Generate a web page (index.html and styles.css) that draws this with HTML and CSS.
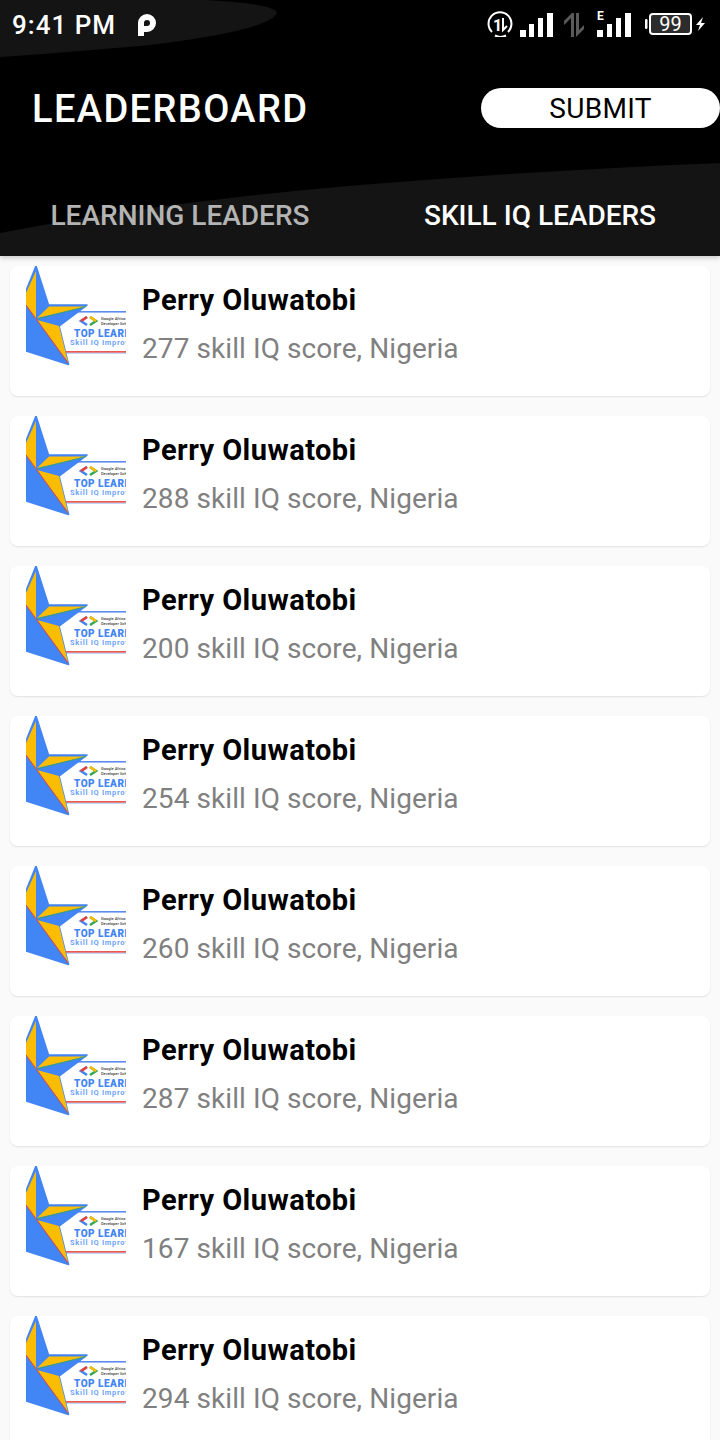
FILE: index.html
```html
<!DOCTYPE html>
<html lang="en">
<head>
<meta charset="utf-8">
<title>Leaderboard</title>
<link rel="stylesheet" href="styles.css">
</head>
<body>
<svg class="defs" width="0" height="0" aria-hidden="true">
  <defs>
    <symbol id="logo" viewBox="0 0 100 100">
      <polygon points="52,46 100,46 100,86 39,86" fill="#fff"/>
      <rect x="52" y="45" width="48" height="1.6" fill="#5b8def"/>
      <rect x="38" y="85" width="62" height="1.8" fill="#ea5a4e"/>
      <rect x="38" y="86.8" width="62" height="0.8" fill="#9dbcf5"/>
      <polygon points="10,0 22.5,39 61,39 33,60 42.5,98.5 0,85 -2,30" fill="#4285f4" stroke="#4285f4" stroke-width="1.6" stroke-linejoin="round"/>
      <polygon points="10,5 0,27 0,39 10,53" fill="#fbbc04"/>
      <polygon points="11,52 23,40.5 60,40.5" fill="#fbbc04"/>
      <line x1="11" y1="53" x2="60" y2="40.5" stroke="#34a853" stroke-width="0.8"/>
      <polygon points="11,54 33,60 42,96" fill="#fbbc04"/>
      <polyline points="0,39 11,54 42,97" fill="none" stroke="#ea4335" stroke-width="1"/>
      <polyline points="61,51 55,55 61,59" fill="none" stroke="#4285f4" stroke-width="2.6"/>
      <path d="M55 55L61 51" fill="none" stroke="#ea4335" stroke-width="2.6"/>
      <polyline points="64,51 70,55 64,59" fill="none" stroke="#34a853" stroke-width="2.6"/>
      <path d="M64 51L70 55" fill="none" stroke="#fbbc04" stroke-width="2.6"/>
      <text class="logo-small" x="75" y="53.5">Google Africa</text>
      <text class="logo-small" x="75" y="58.5">Developer Scholarship</text>
      <text class="logo-top" x="48" y="71">TOP LEARNER</text>
      <text class="logo-skill" x="44" y="78.5">Skill IQ Improvement</text>
    </symbol>
  </defs>
</svg>

<header class="header">
  <svg class="header-art" viewBox="0 0 720 256" width="720" height="256" aria-hidden="true">
    <path d="M0 0H205Q277 4 277 13Q270 30 150 45Q60 53 0 57Z" fill="#141414"/>
    <path d="M0 233C120 210 240 195 360 185S600 168 720 163V256H0Z" fill="#141414"/>
  </svg>

  <div class="status">
    <div class="status-left">
      <span class="time">9:41 PM</span>
      <svg class="p-icon" viewBox="0 0 20 24" width="20" height="24" aria-hidden="true">
        <path d="M1 23V10A9 9 0 1 1 10 19H7V23Z M7 13H10A3 3 0 1 0 7 10Z" fill="#fff" fill-rule="evenodd"/>
      </svg>
    </div>
    <div class="status-right">
      <svg class="sim-icon" viewBox="0 0 26 26" width="26" height="26" aria-hidden="true">
        <path d="M5 21A11.5 11.5 0 1 1 21 21" fill="none" stroke="#fff" stroke-width="2"/>
        <path d="M8 24.5A11.5 11.5 0 0 0 19 24.5" fill="none" stroke="#fff" stroke-width="2"/>
        <text class="sim-text" x="6" y="20">1</text>
        <path d="M16 7V19L20 15" fill="none" stroke="#fff" stroke-width="2"/>
      </svg>
      <svg class="bars" viewBox="0 0 33 26" width="33" height="26" aria-hidden="true">
        <rect x="0" y="19" width="6" height="7" fill="#fff"/>
        <rect x="9" y="13" width="5" height="13" fill="#fff"/>
        <rect x="18" y="7" width="5" height="19" fill="#fff"/>
        <rect x="27" y="2" width="6" height="24" fill="#fff"/>
      </svg>
      <svg class="arrows" viewBox="0 0 22 26" width="22" height="26" aria-hidden="true">
        <path d="M8 26V7L1 14V10L9 2H11V26Z" fill="#5a5a5a"/>
        <path d="M13 2V26L21 18V14L16 19V2Z" fill="#5a5a5a"/>
      </svg>
      <svg class="bars-e" viewBox="0 -8 34 34" width="34" height="34" aria-hidden="true">
        <text class="e-text" x="0" y="9">E</text>
        <rect x="0" y="19" width="6" height="7" fill="#fff"/>
        <rect x="10" y="13" width="5" height="13" fill="#fff"/>
        <rect x="19" y="7" width="5" height="19" fill="#fff"/>
        <rect x="28" y="2" width="6" height="24" fill="#fff"/>
      </svg>
      <svg class="battery" viewBox="0 0 60 26" width="60" height="26" aria-hidden="true">
        <rect x="0" y="8" width="2.5" height="10" rx="1.2" fill="#fff"/>
        <rect x="5" y="3" width="41" height="20" rx="3" fill="#2c2c2c" stroke="#fff" stroke-width="2"/>
        <text class="batt-text" x="25.5" y="20">99</text>
        <path d="M58 6L51 14H55L53 20L60 12H56Z" fill="#fff"/>
      </svg>
    </div>
  </div>

  <div class="app-row">
    <h1 class="title">LEADERBOARD</h1>
    <button class="submit">SUBMIT</button>
  </div>

  <nav class="tabs">
    <div class="tab">LEARNING LEADERS</div>
    <div class="tab tab-active">SKILL IQ LEADERS</div>
  </nav>
</header>

<main class="list">
  <article class="card"><svg class="card-logo" width="100" height="100"><use href="#logo"/></svg><div class="card-text"><div class="name">Perry Oluwatobi</div><div class="score">277 skill IQ score, Nigeria</div></div></article>
  <article class="card"><svg class="card-logo" width="100" height="100"><use href="#logo"/></svg><div class="card-text"><div class="name">Perry Oluwatobi</div><div class="score">288 skill IQ score, Nigeria</div></div></article>
  <article class="card"><svg class="card-logo" width="100" height="100"><use href="#logo"/></svg><div class="card-text"><div class="name">Perry Oluwatobi</div><div class="score">200 skill IQ score, Nigeria</div></div></article>
  <article class="card"><svg class="card-logo" width="100" height="100"><use href="#logo"/></svg><div class="card-text"><div class="name">Perry Oluwatobi</div><div class="score">254 skill IQ score, Nigeria</div></div></article>
  <article class="card"><svg class="card-logo" width="100" height="100"><use href="#logo"/></svg><div class="card-text"><div class="name">Perry Oluwatobi</div><div class="score">260 skill IQ score, Nigeria</div></div></article>
  <article class="card"><svg class="card-logo" width="100" height="100"><use href="#logo"/></svg><div class="card-text"><div class="name">Perry Oluwatobi</div><div class="score">287 skill IQ score, Nigeria</div></div></article>
  <article class="card"><svg class="card-logo" width="100" height="100"><use href="#logo"/></svg><div class="card-text"><div class="name">Perry Oluwatobi</div><div class="score">167 skill IQ score, Nigeria</div></div></article>
  <article class="card"><svg class="card-logo" width="100" height="100"><use href="#logo"/></svg><div class="card-text"><div class="name">Perry Oluwatobi</div><div class="score">294 skill IQ score, Nigeria</div></div></article>
</main>
</body>
</html>
```
FILE: styles.css
```css
* { box-sizing: border-box; }
html, body { margin: 0; padding: 0; height: 1440px; overflow: hidden; }
body { background: #fafafa; font-family: Roboto, "Liberation Sans", sans-serif; width: 720px; }
.defs { position: absolute; }

.header {
  position: relative;
  height: 256px;
  background: #000;
  color: #fff;
  display: flex;
  flex-direction: column;
  box-shadow: 0 2px 5px rgba(0,0,0,.2);
  z-index: 1;
}
.header-art { position: absolute; left: 0; top: 0; }

.status {
  position: relative;
  height: 48px;
  display: flex;
  justify-content: space-between;
  align-items: flex-start;
  padding: 0 15px 0 12px;
}
.status-left { display: flex; align-items: flex-start; gap: 21px; padding-top: 1px; }
.time { font-size: 26px; font-weight: 500; line-height: 48px; letter-spacing: 1px; }
.p-icon { display: block; margin-top: 12px; }
.status-right { display: flex; align-items: flex-start; padding-top: 11px; }
.sim-icon { margin-right: 7px; }
.arrows { margin-left: 10px; }
.bars-e { margin-left: 12px; margin-top: -8px; }
.battery { margin-left: 14px; }
.sim-text { font-size: 16px; font-weight: 700; fill: #fff; }
.e-text { font-size: 12px; font-weight: 700; fill: #fff; }
.batt-text { font-size: 20px; fill: #fff; text-anchor: middle; }

.app-row {
  position: relative;
  height: 72px;
  margin-top: 24px;
  display: flex;
  justify-content: space-between;
  align-items: center;
  padding-left: 32px;
}
.title { margin: 0; padding-top: 2px; font-size: 38px; font-weight: 500; line-height: 48px; letter-spacing: 1.4px; }
.submit {
  width: 239px;
  height: 40px;
  border: 0;
  border-radius: 20px;
  background: #fff;
  color: #000;
  font: 400 28px/40px Roboto, sans-serif;
  letter-spacing: .3px;
  padding: 1px 0 0;
}

.tabs {
  position: relative;
  margin-top: auto;
  height: 80px;
  padding-bottom: 2px;
  display: flex;
}
.tab {
  flex: 1;
  display: flex;
  align-items: center;
  justify-content: center;
  font-size: 28px;
  font-weight: 500;
  color: #b3b3b3;
}
.tab-active { color: #fff; }

.list {
  display: flex;
  flex-direction: column;
  gap: 20px;
  padding: 10px 10px 0;
}
.card {
  flex: none;
  height: 130px;
  background: #fff;
  border-radius: 8px;
  box-shadow: 0 1px 2px rgba(0,0,0,.1);
  display: flex;
  align-items: flex-start;
  padding-left: 16px;
}
.card-logo { flex: none; display: block; }
.card-text { margin-left: 16px; padding-top: 14px; }
.name { font-size: 29px; font-weight: 700; line-height: 40px; color: #000; letter-spacing: .45px; }
.score { font-size: 28px; line-height: 40px; margin-top: 9px; color: #808080; letter-spacing: .08px; }

.logo-small { font-size: 4px; font-weight: 500; fill: #444; font-family: Roboto, sans-serif; }
.logo-top { font-size: 10px; font-weight: 900; fill: #4285f4; font-family: Roboto, sans-serif; letter-spacing: .5px; }
.logo-skill { font-size: 7.5px; font-weight: 700; fill: #6fa3f7; letter-spacing: .7px; font-family: Roboto, sans-serif; }
```
